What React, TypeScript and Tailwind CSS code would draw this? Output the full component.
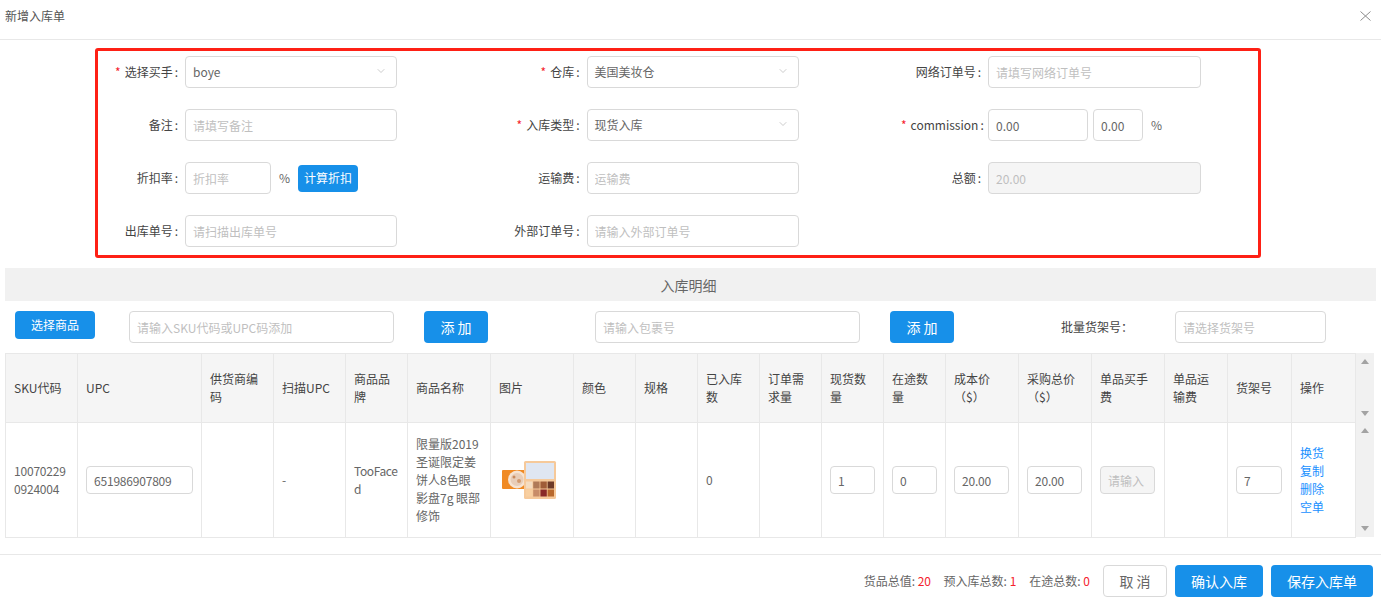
import { ChevronDown } from "lucide-react";
import type { ReactNode } from "react";

const colWidths = [72, 124, 72, 72, 62, 83, 83, 62, 62, 62, 62, 62, 62, 73, 73, 73, 63, 64, 64];

const headers: ReactNode[] = [
  "SKU代码", "UPC", "供货商编码", "扫描UPC", "商品品牌", "商品名称", "图片", "颜色", "规格",
  "已入库数", "订单需求量", "现货数量", "在途数量",
  <>成本价<br />（$）</>, <>采购总价<br />（$）</>,
  "单品买手费", "单品运输费", "货架号", "操作",
];

function Label({ text, required }: { text: string; required?: boolean }) {
  return (
    <label className="w-[87px] shrink-0 pr-[7px] text-right whitespace-nowrap text-[#444]">
      {required && <span className="mr-[4px] text-[#f5222d]">*</span>}
      {text}
      <span className="ml-[2px]">:</span>
    </label>
  );
}

function Field({ className, placeholder, value, disabled }: { className?: string; placeholder?: string; value?: string; disabled?: boolean }) {
  return (
    <input
      readOnly
      disabled={disabled}
      placeholder={placeholder}
      value={value ?? ""}
      className={`h-8 rounded border border-[#d9d9d9] px-[7px] text-[12px] text-[#666] outline-none placeholder:text-[#bfbfbf] disabled:bg-[#f5f5f5] disabled:text-[#bfbfbf] ${className ?? "w-[212px]"}`}
    />
  );
}

function SelectBox({ value }: { value: string }) {
  return (
    <div className="flex h-8 w-[212px] items-center justify-between rounded border border-[#d9d9d9] pl-[7px] pr-[9px] text-[#666]">
      <span>{value}</span>
      <ChevronDown size={12} strokeWidth={1} className="-mt-[2px] text-[#999]" />
    </div>
  );
}

function Col({ children }: { children: ReactNode }) {
  return <div className="flex w-[401.5px] shrink-0 items-center">{children}</div>;
}

function CellInput({ value, width, disabled, placeholder }: { value?: string; width: string; disabled?: boolean; placeholder?: string }) {
  return (
    <input
      readOnly
      disabled={disabled}
      value={value ?? ""}
      placeholder={placeholder}
      className={`h-7 rounded border border-[#d9d9d9] px-[7px] text-[12px] tracking-[-0.2px] text-[#666] outline-none placeholder:tracking-normal placeholder:text-[#bfbfbf] disabled:bg-[#f5f5f5] ${width}`}
    />
  );
}

function Colgroup() {
  return (
    <colgroup>
      {colWidths.map((w, i) => (
        <col key={i} style={{ width: w }} />
      ))}
    </colgroup>
  );
}

function ScrollBar() {
  return (
    <div className="flex w-[18px] shrink-0 flex-col items-center justify-between bg-[#f1f1f1] py-[6px]">
      <div className="h-0 w-0 border-x-[4px] border-b-[5px] border-x-transparent border-b-[#a3a3a3]" />
      <div className="h-0 w-0 border-x-[4px] border-t-[5px] border-x-transparent border-t-[#a3a3a3]" />
    </div>
  );
}

function Palette() {
  const swatches = [
    ["#f5dcc0", "#b07a58", "#a05c38", "#6e3a28"],
    ["#f8cfa0", "#c88c68", "#8a2a28", "#b8682c"],
  ];
  return (
    <svg width="55" height="38" viewBox="0 0 55 38" className="block">
      <rect x="0" y="9" width="24" height="19" rx="1" fill="#f08a24" />
      <circle cx="15" cy="18.5" r="9" fill="#f6e3d2" />
      <circle cx="15" cy="18.5" r="6.5" fill="#e8cdb8" />
      <circle cx="12" cy="16" r="1.5" fill="#c98a5c" />
      <circle cx="17" cy="20" r="2" fill="#d29a70" />
      <rect x="22" y="0" width="32" height="38" rx="1.5" fill="#f6c99a" />
      <rect x="24" y="2" width="28" height="16" fill="#dfe6f2" />
      {swatches.map((row, r) =>
        row.map((c, i) => <rect key={`${r}-${i}`} x={24 + i * 7.2} y={20.5 + r * 8} width="6.4" height="7" fill={c} />),
      )}
    </svg>
  );
}

const td = "border border-[#e8e8e8] px-[8px] align-middle break-all";

export default function App() {
  return (
    <div className="h-[603px] w-full overflow-hidden bg-white font-['Noto_Sans_CJK_SC','Noto_Sans',sans-serif] text-[12px] leading-[18px] text-[#666]">
      <div className="flex h-10 items-center justify-between border-b border-[#e8e8e8] pl-[5px] pr-[10px]">
        <span className="-mt-[8px] text-[#555]">新增入库单</span>
        <svg width="11" height="10" viewBox="0 0 11 10" className="-mt-[8px]" stroke="#8c8c8c" strokeWidth="1">
          <path d="M0.5 0.5 L10.5 9.5 M10.5 0.5 L0.5 9.5" fill="none" />
        </svg>
      </div>

      <div className="ml-[95px] mt-2 flex h-[210px] w-[1166px] flex-col gap-[21px] rounded-[3px] border-[3px] border-[#fe2015] pt-[5px]">
        <div className="flex">
          <Col><Label text="选择买手" required /><SelectBox value="boye" /></Col>
          <Col><Label text="仓库" required /><SelectBox value="美国美妆仓" /></Col>
          <Col><Label text="网络订单号" /><Field placeholder="请填写网络订单号" className="w-[213px]" /></Col>
        </div>
        <div className="flex">
          <Col><Label text="备注" /><Field placeholder="请填写备注" /></Col>
          <Col><Label text="入库类型" required /><SelectBox value="现货入库" /></Col>
          <Col>
            <Label text="commission" required />
            <Field value="0.00" className="w-[100px]" />
            <Field value="0.00" className="ml-[5px] w-[50px]" />
            <span className="ml-[8px]">%</span>
          </Col>
        </div>
        <div className="flex">
          <Col>
            <Label text="折扣率" />
            <Field placeholder="折扣率" className="w-[86px]" />
            <span className="ml-[8px]">%</span>
            <button className="ml-[8px] h-[27px] w-[60px] rounded bg-[#1790e9] text-white">计算折扣</button>
          </Col>
          <Col><Label text="运输费" /><Field placeholder="运输费" /></Col>
          <Col><Label text="总额" /><Field value="20.00" disabled className="w-[213px]" /></Col>
        </div>
        <div className="flex">
          <Col><Label text="出库单号" /><Field placeholder="请扫描出库单号" /></Col>
          <Col><Label text="外部订单号" /><Field placeholder="请输入外部订单号" /></Col>
        </div>
      </div>

      <div className="mx-[5px] mt-[10px] flex h-[33px] items-center justify-center bg-[#f1f1f1] pr-[4px] text-[14px] text-[#666]">入库明细</div>

      <div className="mt-[10px] flex h-8 items-start pl-[15px]">
        <button className="h-7 w-20 rounded bg-[#1790e9] text-white">选择商品</button>
        <Field placeholder="请输入SKU代码或UPC码添加" className="ml-[34px] w-[265px]" />
        <button className="ml-[30px] h-8 w-16 rounded bg-[#1790e9] text-[14px] text-white">添 加</button>
        <Field placeholder="请输入包裹号" className="ml-[107px] w-[265px]" />
        <button className="ml-[30px] h-8 w-16 rounded bg-[#1790e9] text-[14px] text-white">添 加</button>
        <span className="ml-[107px] mt-[7px] w-[114px] text-[#444]">批量货架号：</span>
        <Field placeholder="请选择货架号" className="w-[151px]" />
      </div>

      <div className="ml-[5px] mt-[10px] w-[1368px]">
        <div className="flex h-[69px]">
          <table className="w-[1350px] table-fixed border-collapse text-[#444]">
            <Colgroup />
            <thead>
              <tr className="h-[69px] bg-[#f5f5f5]">
                {headers.map((h, i) => (
                  <th key={i} className={`${td} text-left font-normal`}>{h}</th>
                ))}
              </tr>
            </thead>
          </table>
          <ScrollBar />
        </div>
        <div className="flex h-[115px]">
          <table className="w-[1350px] table-fixed border-collapse">
            <Colgroup />
            <tbody>
              <tr className="h-[115px]">
                <td className={`${td} tracking-[-0.2px]`}>100702290924004</td>
                <td className={td}><CellInput value="651986907809" width="w-[107px]" /></td>
                <td className={td}></td>
                <td className={td}>-</td>
                <td className={`${td} tracking-[-0.4px]`}>TooFaced</td>
                <td className={td}>限量版2019圣诞限定姜饼人8色眼影盘7g 眼部修饰</td>
                <td className="border border-[#e8e8e8] pl-[11px] align-middle"><Palette /></td>
                <td className={td}></td>
                <td className={td}></td>
                <td className={td}>0</td>
                <td className={td}></td>
                <td className={td}><CellInput value="1" width="w-[45px]" /></td>
                <td className={td}><CellInput value="0" width="w-[45px]" /></td>
                <td className={td}><CellInput value="20.00" width="w-[55px]" /></td>
                <td className={td}><CellInput value="20.00" width="w-[55px]" /></td>
                <td className={td}><CellInput placeholder="请输入" disabled width="w-[55px]" /></td>
                <td className={td}></td>
                <td className={td}><CellInput value="7" width="w-[46px]" /></td>
                <td className={`${td} text-[#1890ff]`}>
                  <div>换货</div>
                  <div>复制</div>
                  <div>删除</div>
                  <div>空单</div>
                </td>
              </tr>
            </tbody>
          </table>
          <ScrollBar />
        </div>
      </div>

      <div className="mt-[17px] flex h-[49px] items-start justify-end border-t border-[#e8e8e8] pr-2 pt-[10px]">
        <div className="mt-[7px] flex gap-[13px] text-[#666]">
          <span>货品总值: <span className="tracking-[-0.3px] text-[#f5222d]">20</span></span>
          <span>预入库总数: <span className="text-[#f5222d]">1</span></span>
          <span>在途总数: <span className="text-[#f5222d]">0</span></span>
        </div>
        <button className="ml-[13px] h-8 w-16 rounded border border-[#d9d9d9] bg-white text-[14px] text-[#666]">取 消</button>
        <button className="ml-2 h-8 w-[88px] rounded bg-[#1790e9] text-[14px] text-white">确认入库</button>
        <button className="ml-2 h-8 w-[102px] rounded bg-[#1790e9] text-[14px] text-white">保存入库单</button>
      </div>
    </div>
  );
}
